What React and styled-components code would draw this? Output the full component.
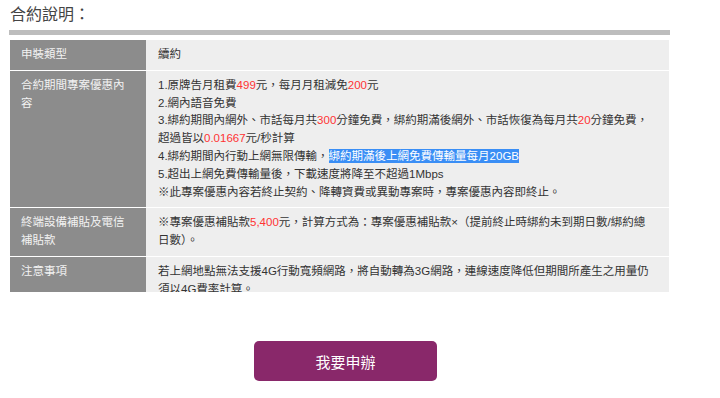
import React from 'react';
import styled, { createGlobalStyle } from 'styled-components';

const GlobalStyle = createGlobalStyle`
  html, body {
    margin: 0;
    padding: 0;
    background: #fff;
  }
  body {
    font-family: "Liberation Sans", "Noto Sans CJK TC", sans-serif;
    color: #333;
  }
`;

const Page = styled.div`
  width: 720px;
  height: 398px;
  overflow: hidden;
  padding-left: 9px;
  box-sizing: border-box;
`;

const Title = styled.h3`
  margin: 0;
  padding-top: 3px;
  height: 27px;
  line-height: 24px;
  font-size: 16px;
  font-weight: 400;
  color: #444;
  box-sizing: border-box;
  padding-left: 1px;
`;

const Bar = styled.div`
  width: 661px;
  height: 5px;
  background: #bdbdbd;
  margin-top: 3px;
  margin-bottom: 5px;
`;

const ScrollBox = styled.div`
  width: 659px;
  height: 252px;
  margin-left: 1px;
  overflow: hidden;
`;

const Table = styled.div`
  display: grid;
  grid-template-columns: 136px 1fr;
  font-size: 11.5px;
  line-height: 17.8px;
`;

const Label = styled.div`
  background: #8c8c8c;
  color: #f2f2f2;
  padding: 6px 20px 6px 11px;
  border-bottom: 1px solid #fff;
`;

const Cell = styled.div`
  background: #eee;
  color: #333;
  padding: 6px 14px 6px 12px;
  border-bottom: 1px solid #fff;
`;

const Line = styled.div``;

const Red = styled.span`
  color: #f33;
`;

const Selected = styled.span`
  background: #3a8ef5;
  color: #fff;
  padding: 1px 0;
`;

const ButtonRow = styled.div`
  display: flex;
  padding-left: 245px;
  margin-top: 49px;
`;

const ApplyButton = styled.button`
  width: 183px;
  height: 40px;
  border: none;
  border-radius: 5px;
  background: #89286a;
  color: #fff;
  font-family: "Noto Sans CJK TC", sans-serif;
  font-size: 15px;
  cursor: pointer;
`;

const rows = [
  {
    label: '申裝類型',
    content: <Line>續約</Line>,
  },
  {
    label: '合約期間專案優惠內容',
    content: (
      <>
        <Line>1.原牌告月租費<Red>499</Red>元，每月月租減免<Red>200</Red>元</Line>
        <Line>2.網內語音免費</Line>
        <Line>
          3.綁約期間內網外、市話每月共<Red>300</Red>分鐘免費，綁約期滿後網外、市話恢復為每月共<Red>20</Red>分鐘免費，超過皆以<Red>0.01667</Red>元/秒計算
        </Line>
        <Line>4.綁約期間內行動上網無限傳輸，<Selected>綁約期滿後上網免費傳輸量每月20GB</Selected></Line>
        <Line>5.超出上網免費傳輸量後，下載速度將降至不超過1Mbps</Line>
        <Line>※此專案優惠內容若終止契約、降轉資費或異動專案時，專案優惠內容即終止。</Line>
      </>
    ),
  },
  {
    label: '終端設備補貼及電信補貼款',
    content: (
      <Line>
        ※專案優惠補貼款<Red>5,400</Red>元，計算方式為：專案優惠補貼款×（提前終止時綁約未到期日數/綁約總日數）。
      </Line>
    ),
  },
  {
    label: '注意事項',
    content: (
      <Line>
        若上網地點無法支援4G行動寬頻網路，將自動轉為3G網路，連線速度降低但期間所產生之用量仍須以4G費率計算。
      </Line>
    ),
  },
];

export default function App() {
  return (
    <Page>
      <GlobalStyle />
      <Title>合約說明：</Title>
      <Bar />
      <ScrollBox>
        <Table>
          {rows.map((row) => (
            <React.Fragment key={row.label}>
              <Label>{row.label}</Label>
              <Cell>{row.content}</Cell>
            </React.Fragment>
          ))}
        </Table>
      </ScrollBox>
      <ButtonRow>
        <ApplyButton>我要申辦</ApplyButton>
      </ButtonRow>
    </Page>
  );
}
